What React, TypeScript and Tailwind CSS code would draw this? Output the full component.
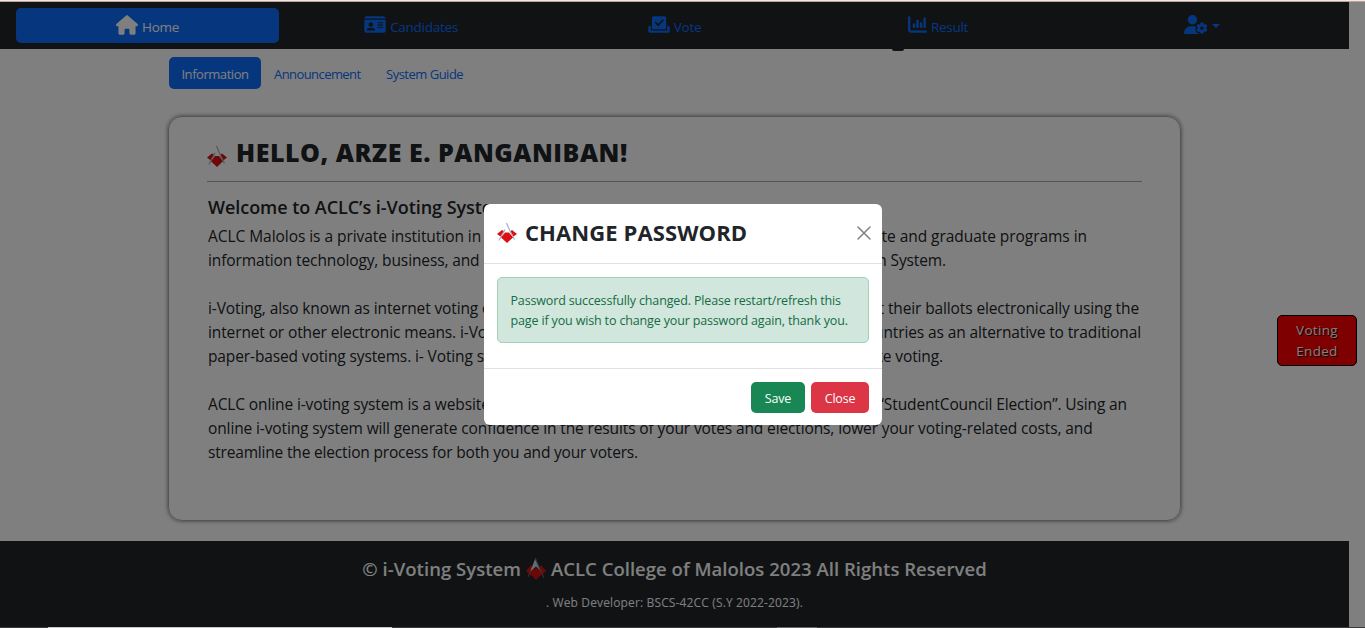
import React from "react";
import { FaHouse, FaIdCard, FaCheckToSlot, FaChartColumn, FaUserGear } from "react-icons/fa6";

function Logo({ className }: { className: string }) {
  return (
    <svg viewBox="0 0 20 21" preserveAspectRatio="none" className={className}>
      <path d="M0 12 5 8 7.500 9.500 3.500 14.500z" fill="#dc1010" />
      <path d="M20 12 15 8 13 9.500 16.500 14.500z" fill="#dc1010" />
      <path d="M9.500 1 13 9 17.500 17.500" fill="none" stroke="#9fb0cc" strokeWidth="1.200" />
      <path d="M8 7.500 5.500 12 2 18.500" fill="none" stroke="#a3aec4" strokeWidth="1.100" />
      <path d="M8 10.500h4L16 15.500 10 21 4 15.500z" fill="#dc1010" />
    </svg>
  );
}

function FooterLogo() {
  return (
    <svg viewBox="0 0 20 22" className="mx-[5px] h-[22px] w-5 shrink-0">
      <path d="M0 13 5 7 8 12 5 18z" fill="#dc1010" />
      <path d="M20 13 15 7 12 12 15 18z" fill="#dc1010" />
      <path d="M9.500 0 4 14 10 8.500 15.500 14z" fill="#d4d5d8" />
      <path d="M9.500 1 18 20M5 12 2 19" fill="none" stroke="#5c6170" strokeWidth="1.100" />
      <path d="M10 9.500 15.500 16 10 22 4.500 16z" fill="#dc1010" />
    </svg>
  );
}

function Line({ left, right, className }: { left: string; right?: string; className: string }) {
  return (
    <div className={"flex h-6 justify-between whitespace-nowrap leading-6 " + className}>
      <span>{left}</span>
      {right && <span>{right}</span>}
    </div>
  );
}

const tab = "flex h-full w-[263px] items-center justify-center text-[13.500px] text-[#0d6efd]";
const label = "relative top-[1.500px] tracking-[-0.280px]";

export default function App() {
  return (
    <div className="relative h-[628px] w-[1365px] overflow-hidden bg-white font-['Open_Sans',sans-serif] text-[#212529]">
      <nav className="flex h-[49px] w-[1349px] items-center gap-[0.500px] bg-[#212529] px-4 pt-[2px]">
        <div className={tab + " !h-[35px] rounded-[5px] bg-[#0d6efd] !text-white"}>
          <FaHouse className="mr-1 h-5 w-[22px] -translate-y-px" />
          <span className={label}>Home</span>
        </div>
        <div className={tab}>
          <FaIdCard className="mr-1 h-[19px] w-[22px] -translate-y-px" />
          <span className={label}>Candidates</span>
        </div>
        <div className={tab}>
          <FaCheckToSlot className="mr-1 h-[19px] w-[22px] -translate-y-px" />
          <span className={label}>Vote</span>
        </div>
        <div className={tab}>
          <FaChartColumn className="mr-1 h-[19px] w-[19px] -translate-y-px" />
          <span className={label}>Result</span>
        </div>
        <div className={tab}>
          <FaUserGear className="mr-1 h-[19px] w-[24px] -translate-y-px" />
          <svg viewBox="0 0 8 4" className="h-1 w-2"><path d="M0 0h8L4 4z" fill="#0d6efd" /></svg>
        </div>
      </nav>
      <main className="h-[492px] w-[1349px] pl-[168px] pt-2">
        <div className="flex h-8 items-center pl-px text-[13px] text-[#0d6efd]">
          <span className="flex h-8 w-[92px] items-center justify-center rounded-[5px] bg-[#0d6efd] pt-[3px] tracking-[-0.450px] text-white">Information</span>
          <span className="ml-[13px] w-[87px] whitespace-nowrap pt-[3px] tracking-[-0.570px]">Announcement</span>
          <span className="ml-[25px] whitespace-nowrap pt-[3px] tracking-[-0.500px]">System Guide</span>
        </div>
        <section className="mt-[27px] h-[405px] w-[1013px] rounded-[14px] border border-[#aaa] px-[38px] pt-5 shadow-[0_0_4px_#777]">
          <header className="flex h-[45px] items-start border-b border-[#a6a8a9]">
            <Logo className="mt-2 h-[22px] w-5" />
            <h1 className="-mt-px ml-[9px] whitespace-nowrap text-[25px] font-extrabold leading-8 tracking-[0.520px]">HELLO, ARZE E. PANGANIBAN!</h1>
          </header>
          <h2 className="mt-[13px] whitespace-nowrap pl-px text-[18px] font-semibold leading-6 tracking-[-0.050px]">Welcome to ACLC’s i-Voting System</h2>
          <div className="mt-[5px] pl-px text-[15.500px] tracking-[-0.120px]">
            <Line className="w-[879px] tracking-[-0.050px]" left="ACLC Malolos is a private institution in Malolos," right="undergraduate and graduate programs in" />
            <Line className="w-[738px]" left="information technology, business, and engineering" right="Information System." />
            <Line className="mt-6 w-[931px]" left="i-Voting, also known as internet voting or online" right="to cast their ballots electronically using the" />
            <Line className="w-[933px]" left="internet or other electronic means. i-Voting is" right="countries as an alternative to traditional" />
            <Line className="w-[735px]" left="paper-based voting systems. i- Voting systems" right="remote voting." />
            <Line className="mt-6 w-[919px]" left="ACLC online i-voting system is a website for the" right="“StudentCouncil Election”. Using an" />
            <Line className="w-[885px]" left="online i-voting system will generate confidence in the results of your votes and elections, lower your voting-related costs, and" />
            <Line className="w-[430px] tracking-[-0.180px]" left="streamline the election process for both you and your voters." />
          </div>
        </section>
      </main>
      <footer className="flex h-[87px] w-[1349px] flex-col items-center bg-[#212529] text-white">
        <div className="mt-4 flex h-6 items-center whitespace-nowrap text-[18.500px] font-semibold leading-6 tracking-[0.030px]">
          <span>© i-Voting System</span>
          <FooterLogo />
          <span>ACLC College of Malolos 2023 All Rights Reserved</span>
        </div>
        <p className="mt-3 whitespace-nowrap text-[12px] leading-5 tracking-[0.140px]">. Web Developer: BSCS-42CC (S.Y 2022-2023).</p>
      </footer>
      <div className="absolute left-[892px] top-[49px] h-[2px] w-3 rounded-b-full bg-[#212529]" />
      <div className="absolute left-[1277px] top-[315px] flex h-[51px] w-20 flex-col items-center justify-center rounded-[5px] border border-black bg-[#ff0000] text-[13.500px] leading-[21px] tracking-[0.300px] text-white [text-shadow:1px_1px_1px_black]">
        <span>Voting</span>
        <span>Ended</span>
      </div>
      <div className="absolute inset-0 flex items-start justify-center bg-black/50 pl-px pt-[204px]">
        <div role="dialog" className="h-[221px] w-[398px] rounded-[6px] bg-white">
          <div className="flex h-[60px] items-center border-b border-[#dee2e6] px-[13px] pb-[2px]">
            <Logo className="h-[21px] w-5" />
            <h3 className="-mt-[2px] ml-2 whitespace-nowrap text-[22px] font-bold leading-8 tracking-[0.100px]">CHANGE PASSWORD</h3>
            <svg viewBox="0 0 14 14" className="ml-auto mr-[-2px] h-[14px] w-[14px]"><path d="m1 1 12 12M13 1 1 13" stroke="#808080" strokeWidth="1.500" strokeLinecap="round" /></svg>
          </div>
          <div className="h-[104px] px-[13px] pt-[13px]">
            <div className="h-[66px] whitespace-nowrap rounded-[5px] border border-[#a3cfbb] bg-[#d1e7dd] px-[12.500px] pt-[13px] text-[12.500px] leading-5 tracking-[-0.150px] text-[#146c43]">
              <p>Password successfully changed. Please restart/refresh this</p>
              <p>page if you wish to change your password again, thank you.</p>
            </div>
          </div>
          <div className="flex h-[57px] justify-end gap-[6px] border-t border-[#dee2e6] px-[13px] pt-[13px] text-[12.500px] font-medium tracking-[-0.200px] text-white">
            <button className="h-[31px] w-[54px] rounded-[5px] bg-[#198754] pt-[3px]">Save</button>
            <button className="h-[31px] w-[58px] rounded-[5px] bg-[#dc3545] pt-[3px]">Close</button>
          </div>
        </div>
      </div>
      <div className="absolute left-0 top-0 h-[2px] w-full border-b border-[#b5a5a0] bg-[#f7e4de]" />
      <div className="absolute bottom-0 left-0 flex h-px w-full bg-[#3b3b3b]">
        <div className="ml-12 w-[344px] bg-[#c8c8c8]" />
        <div className="ml-[385px] w-10 bg-[#666]" />
      </div>
    </div>
  );
}
